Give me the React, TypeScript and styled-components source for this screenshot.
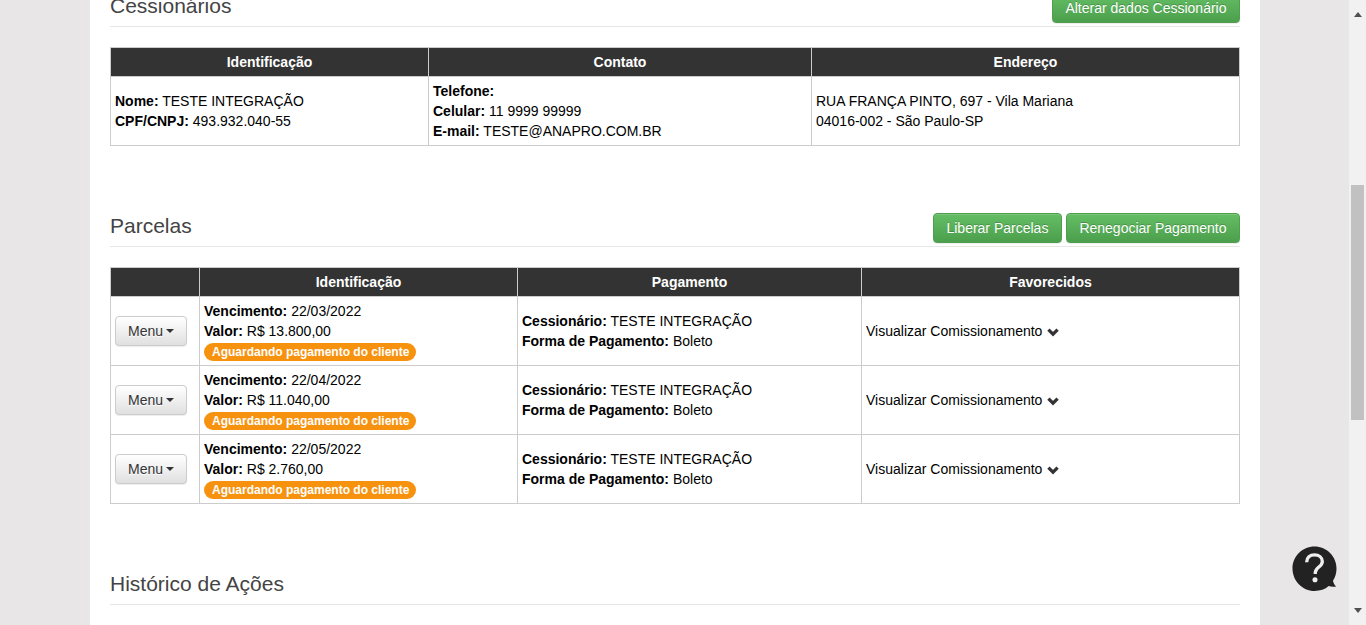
import React from 'react'
import styled, { createGlobalStyle } from 'styled-components'

const GlobalStyle = createGlobalStyle`
  html, body {
    margin: 0;
    height: 100%;
    overflow: hidden;
  }

  body {
    font-family: 'Liberation Sans', Arial, sans-serif;
    font-size: 14px;
    line-height: 20px;
    color: #000;
    background-color: #e8e6e7;
  }
`

const parcelas = [
  { vencimento: '22/03/2022', valor: 'R$ 13.800,00' },
  { vencimento: '22/04/2022', valor: 'R$ 11.040,00' },
  { vencimento: '22/05/2022', valor: 'R$ 2.760,00' },
]

function ChevronDown() {
  return (
    <ChevronIcon viewBox='0 0 12 10' width={12} height={10}>
      <path d='M1.400 2.600 6 7.200l4.600-4.600' fill='none' stroke='#333' strokeWidth={3.2} />
    </ChevronIcon>
  )
}

function HelpBubble() {
  return (
    <HelpButton>
      <svg viewBox='0 0 46 47' width={45} height={46}>
        <path
          d='M23 0.5C35.5 0.5 45.5 10.5 45.5 23c0 4.6-1.2 8.8-3.6 12.4 0.4 2.2 1.4 4.2 3.2 6-2.6 0.6-5.2 0.4-7.6-0.4C33.8 44.400 28.800 46 23 46 10.500 46 0.500 35.500 0.500 23S10.500 0.500 23 0.500Z'
          fill='#222'
        />
        <path
          d='M15 16.500c0-4.500 3.400-7.500 8-7.500s8 2.800 8 6.800c0 5.700-7.200 5.600-7.200 11.400v1.300'
          fill='none'
          stroke='#eee'
          strokeWidth={3.4}
        />
        <circle cx={23.500} cy={34.500} r={2.600} fill='#eee' />
      </svg>
    </HelpButton>
  )
}

export default function App() {
  return (
    <>
      <GlobalStyle />
      <Window>
        <Viewport>
          <Card>
            <Section>
              <SectionHeader>
                <SectionTitle>Cessionários</SectionTitle>
                <Actions>
                  <GreenButton>Alterar dados Cessionário</GreenButton>
                </Actions>
              </SectionHeader>
              <DataTable>
                <colgroup>
                  <Column $width={318} />
                  <Column $width={383} />
                  <Column $width={428} />
                </colgroup>
                <thead>
                  <tr>
                    <HeadCell>Identificação</HeadCell>
                    <HeadCell>Contato</HeadCell>
                    <HeadCell>Endereço</HeadCell>
                  </tr>
                </thead>
                <tbody>
                  <tr>
                    <BodyCell>
                      <Line><b>Nome:</b> TESTE INTEGRAÇÃO</Line>
                      <Line><b>CPF/CNPJ:</b> 493.932.040-55</Line>
                    </BodyCell>
                    <BodyCell>
                      <Line><b>Telefone:</b></Line>
                      <Line><b>Celular:</b> 11 9999 99999</Line>
                      <Line><b>E-mail:</b> TESTE@ANAPRO.COM.BR</Line>
                    </BodyCell>
                    <BodyCell>
                      <Line>RUA FRANÇA PINTO, 697 - Vila Mariana</Line>
                      <Line>04016-002 - São Paulo-SP</Line>
                    </BodyCell>
                  </tr>
                </tbody>
              </DataTable>
            </Section>

            <Section>
              <SectionHeader>
                <SectionTitle>Parcelas</SectionTitle>
                <Actions>
                  <GreenButton>Liberar Parcelas</GreenButton>
                  <GreenButton>Renegociar Pagamento</GreenButton>
                </Actions>
              </SectionHeader>
              <DataTable>
                <colgroup>
                  <Column $width={89} />
                  <Column $width={318} />
                  <Column $width={344} />
                  <Column $width={378} />
                </colgroup>
                <thead>
                  <tr>
                    <HeadCell />
                    <HeadCell>Identificação</HeadCell>
                    <HeadCell>Pagamento</HeadCell>
                    <HeadCell>Favorecidos</HeadCell>
                  </tr>
                </thead>
                <tbody>
                  {parcelas.map((parcela) => (
                    <tr key={parcela.vencimento}>
                      <BodyCell>
                        <MenuButton>
                          Menu
                          <Caret />
                        </MenuButton>
                      </BodyCell>
                      <BodyCell>
                        <Line><b>Vencimento:</b> {parcela.vencimento}</Line>
                        <Line><b>Valor:</b> {parcela.valor}</Line>
                        <Line><StatusBadge>Aguardando pagamento do cliente</StatusBadge></Line>
                      </BodyCell>
                      <BodyCell>
                        <Line><b>Cessionário:</b> TESTE INTEGRAÇÃO</Line>
                        <Line><b>Forma de Pagamento:</b> Boleto</Line>
                      </BodyCell>
                      <BodyCell>
                        <Line>Visualizar Comissionamento <ChevronDown /></Line>
                      </BodyCell>
                    </tr>
                  ))}
                </tbody>
              </DataTable>
            </Section>

            <Section>
              <SectionHeader>
                <SectionTitle>Histórico de Ações</SectionTitle>
              </SectionHeader>
            </Section>
          </Card>
          <HelpBubble />
        </Viewport>

        <Scrollbar>
          <ArrowUp />
          <Track>
            <Thumb />
          </Track>
          <ArrowDown />
        </Scrollbar>
      </Window>
    </>
  )
}

const Window = styled.div`
  display: flex;
  width: 100%;
  height: 625px;
  overflow: hidden;
`

const Viewport = styled.div`
  position: relative;
  flex: 1;
  min-width: 0;
  overflow: hidden;
`

/* the page is scrolled: the first section starts above the window */
const Card = styled.main`
  box-sizing: border-box;
  width: 1170px;
  margin: -74px 0 0 90px;
  padding: 0 20px 40px;
  background-color: #fff;
`

const Section = styled.section`
  padding-top: 67px;
`

const SectionHeader = styled.header`
  display: flex;
  align-items: flex-end;
  justify-content: space-between;
  box-sizing: border-box;
  height: 34px;
  margin-bottom: 20px;
  padding-bottom: 3px;
  border-bottom: 1px solid #e6e6e6;
`

const SectionTitle = styled.h3`
  margin: 0 0 6px;
  font-size: 21px;
  font-weight: 400;
  line-height: 23px;
  color: #444;
`

const Actions = styled.div`
  display: flex;
  gap: 4px;
`

const GreenButton = styled.button`
  height: 30px;
  padding: 0 12.5px;
  font-family: inherit;
  font-size: 14px;
  color: #fff;
  text-shadow: 0 -1px 0 rgba(0, 0, 0, 0.2);
  background-image: linear-gradient(to bottom, #64be64 0%, #4c9f4c 100%);
  border: 1px solid #4f9f4f;
  border-radius: 4px;
  box-shadow: inset 0 1px 0 rgba(255, 255, 255, 0.15), 0 1px 1px rgba(0, 0, 0, 0.075);
`

const DataTable = styled.table`
  width: 1130px;
  table-layout: fixed;
  border-collapse: collapse;
`

const Column = styled.col<{ $width: number }>`
  width: ${(props) => props.$width}px;
`

const HeadCell = styled.th`
  padding: 4px;
  font-weight: 700;
  color: #fff;
  text-align: center;
  background-color: #333;
  border: 1px solid #ccc;
`

const BodyCell = styled.td`
  padding: 4px;
  vertical-align: middle;
  border: 1px solid #ccc;
`

const Line = styled.div`
  height: 20px;
  white-space: nowrap;

  b {
    font-weight: 700;
  }
`

const MenuButton = styled.button`
  display: flex;
  align-items: center;
  justify-content: center;
  gap: 3px;
  box-sizing: border-box;
  width: 72px;
  height: 30px;
  font-family: inherit;
  font-size: 14px;
  color: #333;
  text-shadow: 0 1px 0 #fff;
  background-image: linear-gradient(to bottom, #fff 0%, #e0e0e0 100%);
  border: 1px solid #ccc;
  border-radius: 4px;
  box-shadow: inset 0 1px 0 rgba(255, 255, 255, 0.15), 0 1px 1px rgba(0, 0, 0, 0.075);
`

const Caret = styled.span`
  width: 0;
  height: 0;
  border-top: 4px solid #333;
  border-right: 4px solid transparent;
  border-left: 4px solid transparent;
`

const StatusBadge = styled.span`
  display: inline-block;
  margin-top: 2px;
  padding: 3px 7px 3px 8px;
  font-size: 12px;
  font-weight: 700;
  line-height: 12px;
  color: #fff;
  vertical-align: top;
  background-color: #f7920f;
  border-radius: 10px;
`

const ChevronIcon = styled.svg`
  margin-left: 1px;
  vertical-align: -1px;
`

const HelpButton = styled.div`
  position: absolute;
  top: 546px;
  left: 1292px;
  width: 45px;
  height: 46px;

  svg {
    display: block;
  }
`

const Scrollbar = styled.aside`
  display: flex;
  flex-direction: column;
  align-items: center;
  width: 17px;
  background-color: #f1f1f1;
`

const ArrowUp = styled.div`
  flex: none;
  box-sizing: border-box;
  width: 8px;
  height: 17px;
  border-right: 4px solid transparent;
  border-left: 4px solid transparent;
  border-top: 6px solid #f1f1f1;
  border-bottom: 5px solid #505050;
`

const ArrowDown = styled.div`
  flex: none;
  box-sizing: border-box;
  width: 8px;
  height: 17px;
  border-right: 4px solid transparent;
  border-left: 4px solid transparent;
  border-top: 5px solid #505050;
  border-bottom: 6px solid #f1f1f1;
`

const Track = styled.div`
  flex: 1;
  align-self: stretch;
  padding-top: 168px;
`

const Thumb = styled.div`
  width: 13px;
  height: 235px;
  margin-left: 2px;
  background-color: #c1c1c1;
`
